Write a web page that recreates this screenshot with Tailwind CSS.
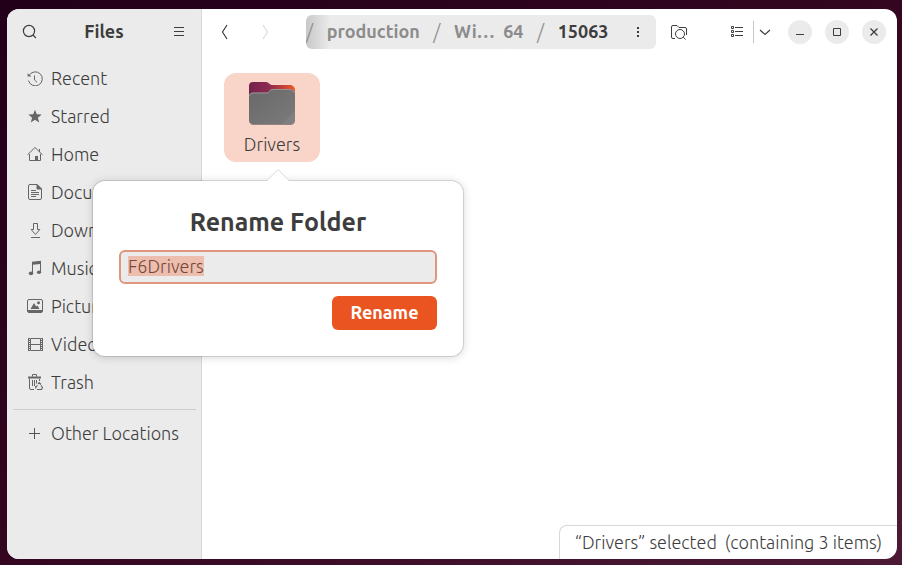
<!DOCTYPE html>
<html lang="en">
<head>
<meta charset="utf-8">
<meta name="viewport" content="width=device-width, initial-scale=1">
<title>Files</title>
<script src="https://cdn.jsdelivr.net/npm/@tailwindcss/browser@4"></script>
</head>
<body class="flex h-screen bg-linear-to-br from-[#22001a] via-[#34061f] to-[#4d1a35] pt-[9px] pr-[5px] pb-[6px] pl-[7px] font-['Ubuntu','Noto_Sans',sans-serif] text-[18px] leading-6 font-[350] text-[#3d3d3d]">
<div class="flex min-w-0 flex-1 rounded-xl bg-white">

  <aside class="flex w-[195px] shrink-0 flex-col rounded-l-xl border-r border-[#d8d8d8] bg-[#ebebeb]">
    <header class="flex h-[46px] items-center justify-between px-[6px]">
      <button class="flex size-[34px] items-center justify-center" aria-label="Search">
        <svg class="size-4" viewBox="0 0 16 16" fill="none" stroke="#3d3d3d" stroke-width="1.2"><circle cx="7" cy="7" r="5.6"/><path d="M11 11l3 3.200"/></svg>
      </button>
      <h1 class="pb-[2px] font-bold">Files</h1>
      <button class="flex size-[34px] items-center justify-center" aria-label="Menu">
        <svg class="size-4" viewBox="0 0 16 16" stroke="#3d3d3d"><path d="M4 3.500h10M4 7.500h10M4 11.500h10"/></svg>
      </button>
    </header>
    <nav class="pt-1" aria-label="Places">
      <ul>
        <li><a href="#" class="flex h-[38px] items-center gap-2 pl-5">
          <svg class="size-4 shrink-0" viewBox="0 0 16 16" fill="none" stroke="#666"><path d="M2.1 5.600A7 7 0 1 1 1.500 10.500"/><path d="M.6 3.200v3.300h3.800z" fill="#666" stroke="none"/><path d="M7.500 5.500V10l2.500 2.400"/></svg>Recent</a></li>
        <li><a href="#" class="flex h-[38px] items-center gap-2 pl-5">
          <svg class="size-4 shrink-0" viewBox="0 0 16 16" fill="#666"><path d="M8 1.8l1.8 4.5 4.9.3-3.8 3.1 1.3 4.8L8 11.8l-4.2 2.7 1.3-4.8-3.8-3.1 4.9-.3z"/></svg>Starred</a></li>
        <li><a href="#" class="flex h-[38px] items-center gap-2 pl-5">
          <svg class="size-4 shrink-0" viewBox="0 0 16 16" fill="none" stroke="#666"><path d="M.5 8.8L8 1.5l7.5 7.3"/><path d="M2.5 8v6.5h11V8M12.5 3v3"/><path d="M8 10h3v4.5H8z" fill="#666" stroke="none"/></svg>Home</a></li>
        <li><a href="#" class="flex h-[38px] items-center gap-2 pl-5">
          <svg class="size-4 shrink-0" viewBox="0 0 16 16" fill="none" stroke="#666"><path d="M10 .5H3A1.5 1.5 0 0 0 1.500 2v12A1.500 1.500 0 0 0 3 15.500h10a1.500 1.500 0 0 0 1.500-1.500V5z"/><path d="M10 .5V5h4.500z" fill="#666"/><path d="M4 6.500h5M4 8.500h8M4 10.500h8M4 12.500h5"/></svg>Documents</a></li>
        <li><a href="#" class="flex h-[38px] items-center gap-2 pl-5">
          <svg class="size-4 shrink-0" viewBox="0 0 16 16" fill="none" stroke="#666"><path d="M6.500 1.500h4v6h2.300l-4.300 5-4.300-5h2.300zM4 15.500h9"/></svg>Downloads</a></li>
        <li><a href="#" class="flex h-[38px] items-center gap-2 pl-5">
          <svg class="size-4 shrink-0" viewBox="0 0 16 16" fill="#666"><path d="M5 1.800L14 .8v11h-1V4L6 4.800V13H5z"/><ellipse cx="4" cy="13.300" rx="2.200" ry="1.900"/><ellipse cx="12" cy="12.200" rx="2.100" ry="1.800"/></svg>Music</a></li>
        <li><a href="#" class="flex h-[38px] items-center gap-2 pl-5">
          <svg class="size-4 shrink-0" viewBox="0 0 16 16" fill="none" stroke="#666"><rect x=".5" y="1.500" width="15" height="13" rx="1.500"/><path d="M1 12h14v2.500H1zM3.500 11L7 5l2.200 3.500L10.500 7.500 12.500 11z" fill="#666" stroke="none"/><circle cx="11.500" cy="4.800" r="1.500" fill="#666" stroke="none"/></svg>Pictures</a></li>
        <li><a href="#" class="flex h-[38px] items-center gap-2 pl-5">
          <svg class="size-4 shrink-0" viewBox="0 0 16 16" fill="none" stroke="#666"><path d="M3.500 2.500h10v12h-10zM3.500 8.500h10"/><path d="M2 2v13M15 2v13" stroke-width="2" stroke-dasharray="1 1"/><path d="M1.500 2v13M15.500 2v13"/></svg>Videos</a></li>
        <li><a href="#" class="flex h-[38px] items-center gap-2 pl-5">
          <svg class="size-4 shrink-0" viewBox="0 0 16 16" fill="none" stroke="#666"><path d="M1 3.500h13" stroke-width="2"/><path d="M5.500 2.500v-2h4v2M2.500 4.500V14A1.500 1.500 0 0 0 4 15.500h3M5.500 6v6M7.500 6v6M9.500 6v3.500M12.500 5v2"/><path d="M10 15.500h4.500l1-2-1.500-2M9 14.500l-.5-1.500 2-1.500M11 10l1.200-1.300L14 10.500" stroke-width="1.200"/></svg>Trash</a></li>
      </ul>
      <hr class="mr-[5px] ml-[6px] mt-2 mb-1 border-[#cdcdcd]">
      <a href="#" class="flex h-[38px] items-center gap-2 pl-5">
        <svg class="size-4 shrink-0" viewBox="0 0 16 16" stroke="#555"><path d="M2 8.500h11M7.500 3v11"/></svg>Other Locations</a>
    </nav>
  </aside>

  <main class="flex min-w-0 flex-1 flex-col">
    <header class="flex h-[46px] items-center pr-[11px] pl-[6px]">
      <button class="flex size-[34px] items-center justify-center" aria-label="Back">
        <svg class="size-4" viewBox="0 0 16 16" fill="none" stroke="#3d3d3d" stroke-width="1.200"><path d="M10 1L5.500 8l4.500 7"/></svg>
      </button>
      <button class="ml-[6px] flex size-[34px] items-center justify-center" aria-label="Forward" disabled>
        <svg class="size-4" viewBox="0 0 16 16" fill="none" stroke="#dcdcdc" stroke-width="1.200"><path d="M6 1l4.500 7L6 15"/></svg>
      </button>
      <nav class="ml-6 flex h-[34px] min-w-0 flex-1 items-center justify-between overflow-hidden rounded-md bg-linear-to-r from-[#c8c8c8] to-[#ebebeb] to-[24px] font-bold whitespace-nowrap text-[#8c8c8c]" aria-label="Path">
        <span class="text-[20px] font-light">/</span>
        <a href="#" class="pb-[2px]">production</a>
        <span class="text-[20px] font-light">/</span>
        <a href="#" class="pb-[2px]">Wi… &nbsp;64</a>
        <span class="text-[20px] font-light">/</span>
        <a href="#" class="pb-[2px] text-[#3d3d3d]" aria-current="page">15063</a>
        <button class="flex size-[34px] items-center justify-center" aria-label="Folder menu">
          <svg class="size-4" viewBox="0 0 16 16" fill="#3d3d3d"><path d="M6 3h2v2H6zM6 7h2v2H6zM6 11h2v2H6z"/></svg>
        </button>
      </nav>
      <button class="ml-[6px] flex size-[34px] items-center justify-center" aria-label="Search in folder">
        <svg class="size-4" viewBox="0 0 16 16" fill="none" stroke="#3d3d3d"><path d="M4 14.500H2A1.500 1.500 0 0 1 .5 13V3A1.500 1.500 0 0 1 2 1.500h4l2 2h6A1.500 1.500 0 0 1 15.500 5v6"/><circle cx="9" cy="10" r="4.500"/><path d="M12.300 13.200l2.200 2.300"/></svg>
      </button>
      <button class="ml-6 flex h-[34px] w-[33px] items-center justify-center" aria-label="List view">
        <svg class="size-4" viewBox="0 0 16 16" fill="none" stroke="#3d3d3d"><path d="M2.500 2.500h2v2h-2zM2.500 6.500h2v2h-2zM2.500 10.500h2v2h-2zM6 3.500h8M6 7.500h8M6 11.500h8"/></svg>
      </button>
      <div class="h-[22px] w-px bg-[#c8c8c8]"></div>
      <button class="flex h-[34px] w-[22px] items-center justify-center" aria-label="View options">
        <svg class="size-4" viewBox="0 0 16 16" fill="none" stroke="#3d3d3d" stroke-width="1.200"><path d="M3 6l5 4.500L13 6"/></svg>
      </button>
      <div class="ml-3 flex gap-[13px]">
        <button class="flex size-6 items-center justify-center rounded-full bg-[#ebebeb]" aria-label="Minimize">
          <svg class="size-4" viewBox="0 0 16 16" stroke="#3d3d3d"><path d="M4 10.500h8"/></svg>
        </button>
        <button class="flex size-6 items-center justify-center rounded-full bg-[#ebebeb]" aria-label="Maximize">
          <svg class="size-4" viewBox="0 0 16 16" fill="none" stroke="#3d3d3d"><path d="M4.500 4.500h7v7h-7z"/></svg>
        </button>
        <button class="flex size-6 items-center justify-center rounded-full bg-[#ebebeb]" aria-label="Close">
          <svg class="size-4" viewBox="0 0 16 16" fill="none" stroke="#3d3d3d" stroke-width="1.300"><path d="M4.500 4.500l7 7M11.500 4.500l-7 7"/></svg>
        </button>
      </div>
    </header>

    <section class="flex-1 px-[22px] pt-[18px]" aria-label="Folder contents">
      <div class="relative w-24">
        <div class="flex h-[89px] flex-col items-center rounded-xl bg-[#f9d4c8] pt-[6px]">
          <svg class="h-[50px] w-[48px]" viewBox="0 0 48 50">
            <defs>
              <linearGradient id="back" x1="0" x2="1"><stop offset="0" stop-color="#74214b"/><stop offset=".45" stop-color="#8e2a50"/><stop offset="1" stop-color="#f15a22"/></linearGradient>
              <linearGradient id="front" x1="0" x2="1" y1="0" y2="1"><stop offset="0" stop-color="#686868"/><stop offset="1" stop-color="#7b7b7b"/></linearGradient>
            </defs>
            <path d="M5 3h13c3 0 3.500 3 6 3h18a5 5 0 0 1 5 5v26H1V7a4 4 0 0 1 4-4z" fill="url(#back)"/>
            <path d="M1 30h46v11.500a4.500 4.500 0 0 1-4.500 4.500h-37A4.500 4.500 0 0 1 1 41.500z" fill="#4c4c4c" opacity=".6"/>
            <path d="M5 13.500h14c2 0 3-3.500 5-3.500h18a5 5 0 0 1 5 5v25.500a4.500 4.500 0 0 1-4.500 4.500h-37A4.500 4.500 0 0 1 1 40.500v-23a4 4 0 0 1 4-4z" fill="url(#front)"/>
            <path d="M1.500 17A4 3 0 0 1 5 14h14c2 0 3-3.500 5-3.500h18a5 4 0 0 1 4.500 3.500" fill="none" stroke="#949494"/>
            <path d="M47 32v8.500a4.500 4.500 0 0 1-4.500 4.500H34z" fill="#858585" opacity=".5"/>
          </svg>
          <span class="mt-[3px]">Drivers</span>
        </div>

        <form class="absolute top-[108px] left-[-131px] z-10 flex w-[370px] flex-col rounded-xl bg-white px-[26px] pt-[25px] pb-[26px] shadow-[0_1px_10px_rgba(0,0,0,0.18),0_0_0_1px_rgba(0,0,0,0.12)]" onsubmit="return false">
          <svg class="absolute top-[-12px] left-[174px] h-[13px] w-[22px]" viewBox="0 0 22 13"><path d="M0 13v-1L11 .5 22 12v1z" fill="#fff"/><path d="M0 11.500L11 .5l11 11" fill="none" stroke="#d8d8d8"/></svg>
          <label for="folder-name" class="text-center text-[25px] leading-8 font-bold">Rename Folder</label>
          <input id="folder-name" type="text" value="F6Drivers" autocomplete="off" spellcheck="false" class="mt-3 h-[34px] w-full rounded-md border-2 border-[#de967e] bg-[#ebebeb] px-[7px] pb-[2px] outline-none selection:bg-[#edbdae] selection:text-[#75483b]">
          <button type="submit" class="mt-3 h-[34px] w-[105px] self-end rounded-md bg-[#e95420] pb-[2px] font-bold text-white">Rename</button>
        </form>
      </div>
    </section>

    <footer class="flex h-[34px] gap-2 self-end rounded-tl-lg rounded-br-xl border-t border-l border-[#d8d8d8] px-[15px] py-1"><span>“Drivers” selected</span><span>(containing 3 items)</span></footer>
  </main>
</div>
<script>
  const nameField = document.getElementById('folder-name');
  nameField.focus();
  nameField.select();
</script>
</body>
</html>
